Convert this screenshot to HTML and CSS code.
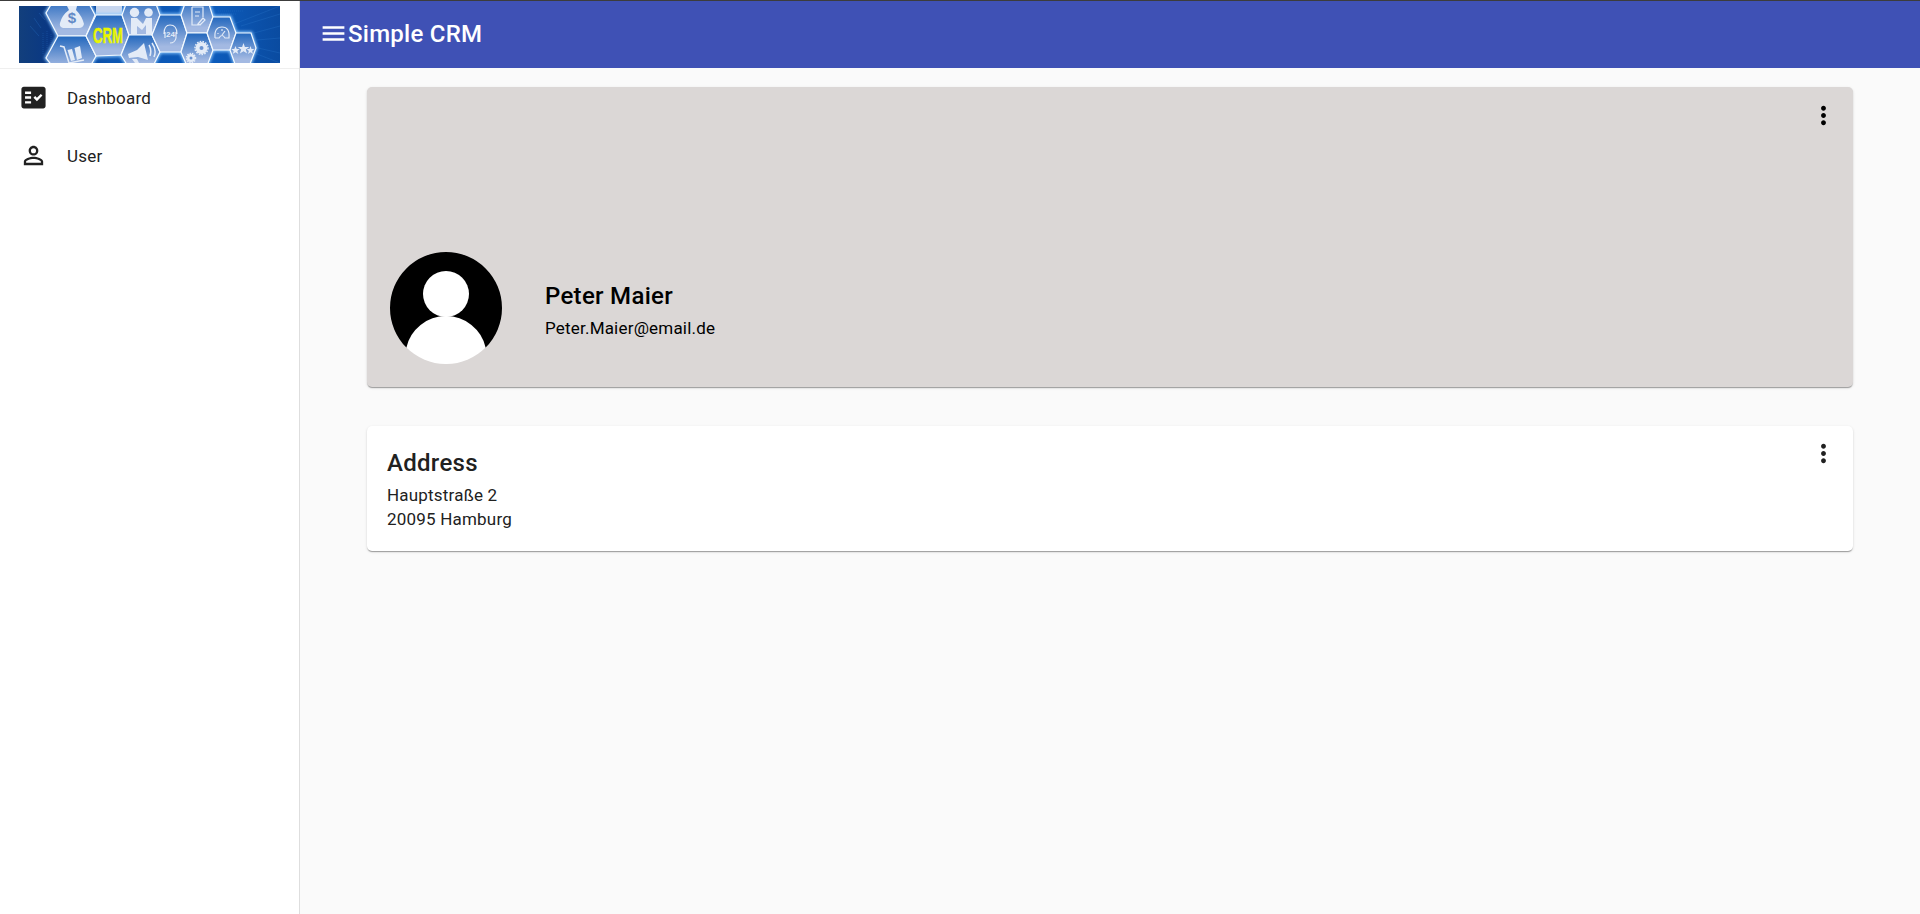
FILE: index.html
```html
<!DOCTYPE html>
<html lang="en">
<head>
<meta charset="utf-8">
<title>Simple CRM</title>
<link rel="stylesheet" href="styles.css">
</head>
<body>
<div class="app">
  <aside class="sidebar">
    <div class="brand">
      <svg class="banner" viewBox="0 0 261 57" role="img" aria-label="CRM">
        <defs>
          <linearGradient id="sky"><stop offset="0" stop-color="#123f7c"/><stop offset=".12" stop-color="#093784"/><stop offset=".35" stop-color="#0d56b2"/><stop offset=".75" stop-color="#0c5bbb"/><stop offset="1" stop-color="#0a4ba0"/></linearGradient>
          <linearGradient id="cell" x1="0" y1="0" x2="0" y2="1"><stop offset="0" stop-color="#2267bd"/><stop offset=".85" stop-color="#a3b9e2"/></linearGradient>
          <filter id="glow" x="-5%" y="-10%" width="110%" height="120%"><feGaussianBlur stdDeviation="1.5"/></filter>
          <g id="cells">
            <path d="M36-8H67L76 9L67 30H39L27 7Z"/><path d="M39 30H67L77 50L68 66H38L27 52Z"/>
            <path d="M77 9L103 9L110 29L102 49L77 50L67 30Z"/><path d="M110-10H134L141 9L133 29H110L103 9Z"/>
            <path d="M110 29H133L141 46L133 62H110L102 49Z"/><path d="M141 9H162L168 27L162 46H141L133 29Z"/>
            <path d="M168-8H188L194 11L188 27H168L162 9Z"/><path d="M168 27H188L194 44L188 60H168L162 46Z"/>
            <path d="M194 11H211L217 27L211 44H194L188 27Z"/><path d="M217 27H232L237 42L231 58H216L211 44Z"/>
          </g>
        </defs>
        <rect width="261" height="57" fill="url(#sky)"/>
        <path d="M77 0H103V9H77Z" fill="#c7d6ee"/>
        <g stroke="#2b79cd" stroke-width=".6" opacity=".5"><path d="M215 18L261 0M222 20L261 8M235 27L261 20M238 34L261 32M239 42L261 47M238 48L261 57M20 7L26 14M15 12L22 22M11 20L20 30"/><path d="M24 27V48M28 25V42M32 28V39M160 4H180M199 5H225M202 8H218" stroke-dasharray="1 1"/></g>
        <use href="#cells" fill="none" stroke="#8fc9ff" stroke-width="3" filter="url(#glow)"/>
        <use href="#cells" fill="url(#cell)" stroke="#f5fbff" stroke-width="1.200"/>
        <g fill="#e3ebf7">
          <path d="M48 0H58L57 4Q63 10 65 18Q64 22 60 22H44Q40 21 41 17Q43 9 50 4Z"/>
          <circle cx="115.500" cy="6.500" r="4.700"/><circle cx="129.500" cy="6.500" r="4.300"/>
          <path d="M112 12H118L124 18L127 12H133V28H127V19L123 24L118 20V28H112Z"/>
          <path d="M109 48L118 44L125 37L129 54L119 51L110 52ZM113 53H118L120 57H116Z"/>
          <circle cx="182.500" cy="42" r="6"/><circle cx="172" cy="52" r="4"/>
          <path d="M216.500 40l1.200 3h3l-2.400 2 1 3-2.800-1.800-2.800 1.800 1-3-2.400-2h3ZM224.500 37l1.400 4h4.400l-3.500 2.600 1.300 4-3.600-2.300-3.600 2.300 1.300-4-3.500-2.600h4.400ZM231.500 40l1 3h2.800l-2.200 2 1 3-2.600-1.800-2.600 1.800 1-3-2.200-2h2.800Z"/>
          <path d="M48.500 44L53 43L56 54L52 55ZM55.500 42L61 40L63 52L58 54Z"/>
        </g>
        <g fill="none" stroke="#e3ebf7" stroke-width="1.500">
          <path d="M41 40L45 41L50 57L65 54M130 39Q133 44 131 50M133 37Q138 44 135 51"/>
          <path stroke-width="1.200" d="M145 28Q145 19 151 19Q158 19 158 28M146 26V32M157 26V32Q156 37 151 37M173 1V19H180M173 1H184V11M176 6H181M176 10H180M179 18L184 12L186 14L181 19Z"/>
          <path stroke-width="1.200" d="M196 32Q195 21 203 21Q211 21 210 32H206Q203 27 200 32H196M203 29L206 25M199 27V28M203 23V25"/>
          <circle cx="182.500" cy="42" r="6.500" stroke-dasharray="1.600 1.200"/><circle cx="172" cy="52" r="4.500" stroke-dasharray="1.400 1"/>
        </g>
        <circle cx="182.500" cy="42" r="2" fill="#6b93d1"/><circle cx="172" cy="52" r="1.500" fill="#6b93d1"/>
        <text x="53" y="17" class="dollar">$</text>
        <text x="151.500" y="30.500" class="support">24</text>
        <text x="74" y="37" class="crm" textLength="30" lengthAdjust="spacingAndGlyphs">CRM</text>
      </svg>
    </div>
    <nav class="nav">
      <a class="item"><svg class="icon" viewBox="0 0 24 24"><path fill-rule="evenodd" d="M20 3H4c-1.100 0-2 .9-2 2v14c0 1.100.9 2 2 2h16c1.100 0 2-.9 2-2V5c0-1.100-.9-2-2-2zM10 17H5v-2h5v2zm0-4H5v-2h5v2zm0-4H5V7h5v2zm4.820 6L12 12.160l1.410-1.410 1.410 1.420L17.990 9l1.420 1.420L14.820 15z"/></svg><span>Dashboard</span></a>
      <a class="item"><svg class="icon" viewBox="0 0 24 24"><path d="M12 5.900a2.100 2.100 0 1 1 0 4.200 2.100 2.100 0 0 1 0-4.200m0 9c2.970 0 6.100 1.460 6.100 2.100v1.100H5.900V17c0-.64 3.130-2.100 6.100-2.100M12 4C9.790 4 8 5.790 8 8s1.790 4 4 4 4-1.790 4-4-1.790-4-4-4zm0 9c-2.670 0-8 1.340-8 4v3h16v-3c0-2.660-5.330-4-8-4z"/></svg><span>User</span></a>
    </nav>
  </aside>
  <div class="main">
    <header class="toolbar"><svg class="menu" viewBox="0 0 24 24"><path d="M3 18h18v-2H3v2zm0-5h18v-2H3v2zm0-7v2h18V6H3z"/></svg><h1 class="title">Simple CRM</h1></header>
    <main class="content">
      <section class="card profile">
        <svg class="more" viewBox="0 0 24 24"><path d="M12 8c1.100 0 2-.9 2-2s-.9-2-2-2-2 .9-2 2 .9 2 2 2zm0 2c-1.100 0-2 .9-2 2s.9 2 2 2 2-.9 2-2-.9-2-2-2zm0 6c-1.100 0-2 .9-2 2s.9 2 2 2 2-.9 2-2-.9-2-2-2z"/></svg>
        <div class="person">
          <svg class="avatar" viewBox="0 0 112 112"><path d="M16.400 95.600A56 56 0 1 1 95.600 95.600Z"/><circle cx="56" cy="42" r="23" fill="#fff"/><path fill="#fff" d="M16.400 95.600A40.500 40 0 0 1 95.600 95.600A56 56 0 0 1 16.400 95.600Z"/></svg>
          <div class="details"><h2 class="heading">Peter Maier</h2><p class="line">Peter.Maier@email.de</p></div>
        </div>
      </section>
      <section class="card address">
        <div><h2 class="heading">Address</h2><p class="line">Hauptstraße 2</p><p class="line">20095 Hamburg</p></div>
        <svg class="more" viewBox="0 0 24 24"><path d="M12 8c1.100 0 2-.9 2-2s-.9-2-2-2-2 .9-2 2 .9 2 2 2zm0 2c-1.100 0-2 .9-2 2s.9 2 2 2 2-.9 2-2-.9-2-2-2zm0 6c-1.100 0-2 .9-2 2s.9 2 2 2 2-.9 2-2-.9-2-2-2z"/></svg>
      </section>
    </main>
  </div>
</div>
</body>
</html>
```

FILE: styles.css
```css
* { box-sizing: border-box; }
body { margin: 0; font-family: Roboto, sans-serif; color: #212121; }
.app { display: flex; height: 914px; border-top: 1px solid #3c3c3c; background: #fafafa; overflow: hidden; }
.sidebar { width: 300px; flex: none; background: #fff; border-right: 1px solid #dedede; }
.brand { height: 68px; padding: 5px 0 0 19px; border-bottom: 1px solid #efefef; }
.banner { display: block; width: 261px; height: 57px; }
.dollar { font: 700 15px "Liberation Sans", sans-serif; fill: #6289c6; text-anchor: middle; }
.support { font: 700 8px "Liberation Sans", sans-serif; fill: #e3ebf7; text-anchor: middle; }
.crm { font: 700 22px "Liberation Sans", sans-serif; fill: #e9f500; stroke: #e9f500; stroke-width: .5px; }
.nav { display: flex; flex-direction: column; }
.item { display: flex; align-items: center; height: 58px; padding-left: 19px; gap: 19px; font-size: 17px; line-height: 24px; letter-spacing: .2px; }
.icon { width: 29px; height: 29px; margin-bottom: 2px; fill: #212121; }
.main { flex: 1; min-width: 0; }
.toolbar { display: flex; align-items: center; height: 67px; padding: 0 0 2px 19px; background: #3f51b5; color: #fff; }
.menu { width: 29px; height: 29px; fill: #fff; }
.title { margin: 0; font-size: 24px; line-height: 32px; font-weight: 500; letter-spacing: .25px; }
.content { display: flex; flex-direction: column; gap: 39px; padding: 19px 67px; }
.card { display: flex; border-radius: 5px; background: #fff; box-shadow: 0 2px 1px -1px rgba(0,0,0,.2), 0 1px 1px rgba(0,0,0,.14), 0 1px 3px rgba(0,0,0,.12); }
.profile { flex-direction: column; justify-content: space-between; height: 300px; padding: 14px 15px 23px 23px; background: #dbd7d6; color: #000; }
.more { width: 29px; height: 29px; flex: none; align-self: flex-end; fill: currentColor; }
.person { display: flex; align-items: center; gap: 43px; }
.avatar { width: 112px; height: 112px; }
.heading { margin: 0; font-size: 24px; line-height: 39px; font-weight: 500; letter-spacing: .3px; }
.line { margin: 0; font-size: 17px; line-height: 24px; letter-spacing: .2px; }
.address { justify-content: space-between; height: 125px; padding: 18px 15px 0 20px; }
.address .more { align-self: flex-start; margin-top: -5px; }
```
